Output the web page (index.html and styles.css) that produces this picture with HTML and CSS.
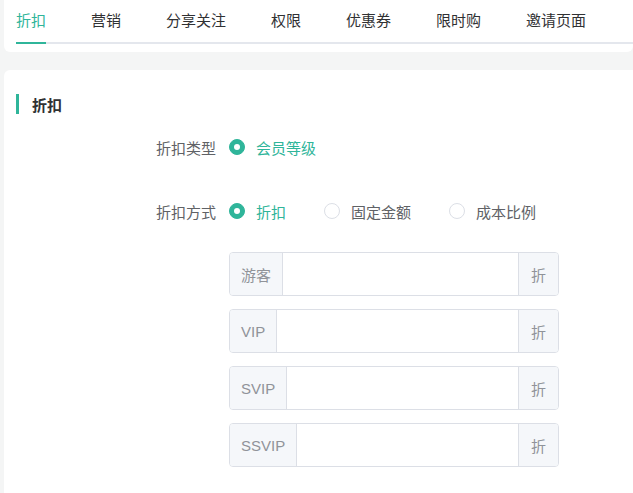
FILE: index.html
```html
<!DOCTYPE html>
<html lang="zh-CN">
<head>
<meta charset="utf-8">
<title>折扣</title>
<link rel="stylesheet" href="styles.css">
</head>
<body>
<div class="page">
  <div class="card tabs-card">
    <div class="tabs">
      <div class="tab active">折扣</div>
      <div class="tab">营销</div>
      <div class="tab">分享关注</div>
      <div class="tab">权限</div>
      <div class="tab">优惠券</div>
      <div class="tab">限时购</div>
      <div class="tab">邀请页面</div>
    </div>
  </div>

  <div class="card main-card">
    <div class="section-title"><span class="bar"></span><span class="title-text">折扣</span></div>

    <div class="form">
      <div class="form-row first">
        <div class="form-label">折扣类型</div>
        <div class="radio-group">
          <label class="radio checked"><span class="radio-dot"></span><span class="radio-text">会员等级</span></label>
        </div>
      </div>
      <div class="form-row second">
        <div class="form-label">折扣方式</div>
        <div class="radio-group">
          <label class="radio checked"><span class="radio-dot"></span><span class="radio-text">折扣</span></label>
          <label class="radio"><span class="radio-dot"></span><span class="radio-text">固定金额</span></label>
          <label class="radio"><span class="radio-dot"></span><span class="radio-text">成本比例</span></label>
        </div>
      </div>

      <div class="inputs">
        <div class="input-group">
          <div class="prepend">游客</div>
          <input class="input" type="text">
          <div class="append">折</div>
        </div>
        <div class="input-group">
          <div class="prepend">VIP</div>
          <input class="input" type="text">
          <div class="append">折</div>
        </div>
        <div class="input-group">
          <div class="prepend">SVIP</div>
          <input class="input" type="text">
          <div class="append">折</div>
        </div>
        <div class="input-group">
          <div class="prepend">SSVIP</div>
          <input class="input" type="text">
          <div class="append">折</div>
        </div>
      </div>
    </div>
  </div>
</div>
</body>
</html>
```

FILE: styles.css
```css
* {
  box-sizing: border-box;
}

html, body {
  margin: 0;
  padding: 0;
  background: #f4f5f5;
  font-family: "Liberation Sans", "Noto Sans CJK SC", sans-serif;
  font-size: 15px;
  color: #303133;
}

.page {
  padding-left: 4px;
}

.card {
  background: #ffffff;
}

.tabs-card {
  border-radius: 0 0 6px 6px;
  padding: 0 0 8px 12px;
}

.tabs {
  display: flex;
  gap: 45px;
  border-bottom: 2px solid #e4e7ed;
}

.tab {
  position: relative;
  height: 42px;
  line-height: 42px;
  color: #303133;
  white-space: nowrap;
}

.tab.active {
  color: #2fb59a;
}

.tab.active::after {
  content: "";
  position: absolute;
  left: 0;
  right: 0;
  bottom: -2px;
  height: 2px;
  background: #2fb59a;
}

.main-card {
  margin-top: 18px;
  border-radius: 6px 0 0 0;
  padding: 24px 12px 40px;
  min-height: 430px;
}

.section-title {
  display: flex;
  align-items: center;
  height: 20px;
}

.bar {
  width: 3px;
  height: 20px;
  background: #2fb59a;
}

.title-text {
  margin-left: 13px;
  font-weight: bold;
  color: #303133;
  font-size: 15px;
}

.form-row {
  display: flex;
  align-items: center;
  height: 44px;
}

.form-row.first {
  margin-top: 11px;
}

.form-row.second {
  margin-top: 20px;
}

.form-label {
  width: 213px;
  padding-right: 13px;
  text-align: right;
  color: #606266;
}

.radio-group {
  display: flex;
  align-items: center;
}

.radio {
  display: flex;
  align-items: center;
  margin-right: 38px;
  color: #606266;
}

.radio-dot {
  position: relative;
  width: 16px;
  height: 16px;
  border-radius: 50%;
  border: 1px solid #dcdfe6;
  background: #ffffff;
}

.radio.checked .radio-dot {
  background: #2fb59a;
  border-color: #2fb59a;
}

.radio.checked .radio-dot::after {
  content: "";
  position: absolute;
  left: 50%;
  top: 50%;
  width: 6px;
  height: 6px;
  margin: -3px 0 0 -3px;
  border-radius: 50%;
  background: #ffffff;
}

.radio-text {
  margin-left: 11px;
}

.radio.checked .radio-text {
  color: #2fb59a;
}

.inputs {
  margin-top: 19px;
  margin-left: 213px;
  display: flex;
  flex-direction: column;
  gap: 13px;
}

.input-group {
  display: flex;
  width: 330px;
  height: 44px;
  border: 1px solid #dcdfe6;
  border-radius: 4px;
  overflow: hidden;
}

.prepend,
.append {
  display: flex;
  align-items: center;
  background: #f5f7fa;
  color: #909399;
  white-space: nowrap;
}

.prepend {
  padding: 0 11px;
  border-right: 1px solid #dcdfe6;
}

.append {
  padding: 0 12px;
  border-left: 1px solid #dcdfe6;
}

.input {
  flex: 1;
  min-width: 0;
  border: none;
  outline: none;
  padding: 0 12px;
  font: inherit;
  background: #ffffff;
}
```
